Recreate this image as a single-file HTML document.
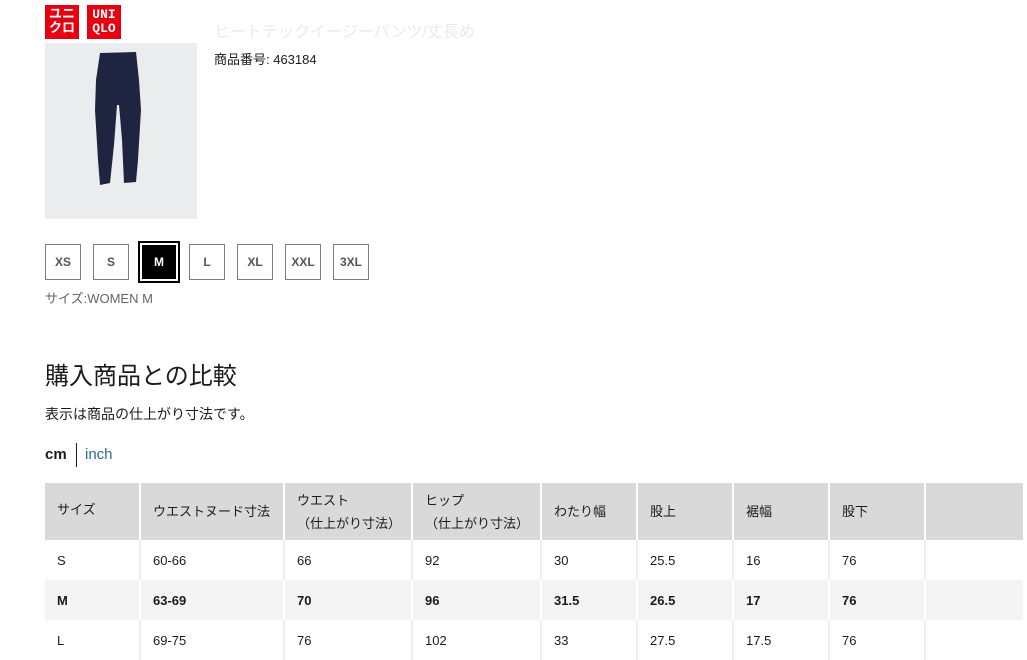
<!DOCTYPE html>
<html><head><meta charset="utf-8"><style>
*{margin:0;padding:0;box-sizing:border-box}
body{width:1027px;height:658px;overflow:hidden;background:#fff;font-family:"Liberation Sans","Noto Sans CJK JP",sans-serif;color:#1b1b1b;position:relative}
.a{position:absolute}
.logo{background:#e60012;width:34px;height:34px;color:#fff;font-weight:bold;font-size:13px;line-height:14px;text-align:center;padding-top:3px;letter-spacing:0px;font-family:"Liberation Mono","Noto Sans CJK JP",monospace}
.sz{width:36px;height:36px;border:1px solid #7d7d7d;font-size:12px;font-weight:bold;color:#555;text-align:center;line-height:34px;top:244px}
table{position:absolute;left:45px;top:483px;border-collapse:collapse;font-size:13px;width:978px;border:none}
td{height:40px;padding:0 0 0 12px;border:none;border-left:2px solid #eee;vertical-align:middle}
tr.h td{height:57px;background:#d9d9d9;border-left:2px solid #fff;vertical-align:middle;line-height:23px}
tr td:first-child{border-left:none}
tr.m td{background:#f4f4f4;font-weight:bold;border-left:2px solid #fff}
tr.m td:first-child{border-left:none}
</style></head><body>
<div class="a logo" style="left:45px;top:5px">ユニ<br>クロ</div>
<div class="a logo" style="left:87px;top:5px">UNI<br>QLO</div>
<div class="a" style="left:45px;top:43px;width:152px;height:176px;background:#ebecee"></div>
<svg class="a" style="left:90px;top:50px" width="60" height="140" viewBox="0 0 60 140">
<path d="M10 3 L46 2 L49 30 L51 60 L48 110 L46 132 L34 133 L32 90 L29 55 L27 55 L24 95 L20 133 L10 135 L8 110 L5 60 L6 30 Z" fill="#1f2540"/>
</svg>
<div class="a" style="left:214px;top:18px;font-size:16px;color:#eaeaea">ヒートテックイージーパンツ/丈長め</div>
<div class="a" style="left:214px;top:49px;font-size:13px">商品番号: 463184</div>
<div class="a sz" style="left:45px">XS</div>
<div class="a sz" style="left:93px">S</div>
<div class="a sz" style="left:138px;top:241px;width:42px;height:42px;border:2px solid #000;background:#fff;padding:2px"><div style="background:#000;color:#fff;width:34px;height:34px;line-height:34px">M</div></div>
<div class="a sz" style="left:189px">L</div>
<div class="a sz" style="left:237px">XL</div>
<div class="a sz" style="left:285px">XXL</div>
<div class="a sz" style="left:333px">3XL</div>
<div class="a" style="left:45px;top:288px;font-size:13px;color:#666">サイズ:WOMEN M</div>
<div class="a" style="left:45px;top:356px;font-size:24px">購入商品との比較</div>
<div class="a" style="left:45px;top:404px;font-size:14px">表示は商品の仕上がり寸法です。</div>
<div class="a" style="left:45px;top:446px;font-size:15px;font-weight:bold">cm</div>
<div class="a" style="left:76px;top:443px;width:1px;height:24px;background:#1b1b1b"></div>
<div class="a" style="left:85px;top:446px;font-size:15px;color:#2a6a93">inch</div>
<table>
<colgroup><col style="width:95px"><col style="width:144px"><col style="width:128px"><col style="width:129px"><col style="width:96px"><col style="width:96px"><col style="width:96px"><col style="width:96px"><col></colgroup>
<tr class="h"><td style="vertical-align:top;padding-top:15px">サイズ</td><td>ウエストヌード寸法</td><td>ウエスト<br>（仕上がり寸法）</td><td>ヒップ<br>（仕上がり寸法）</td><td>わたり幅</td><td>股上</td><td>裾幅</td><td>股下</td><td></td></tr>
<tr><td>S</td><td>60-66</td><td>66</td><td>92</td><td>30</td><td>25.5</td><td>16</td><td>76</td><td></td></tr>
<tr class="m"><td>M</td><td>63-69</td><td>70</td><td>96</td><td>31.5</td><td>26.5</td><td>17</td><td>76</td><td></td></tr>
<tr><td>L</td><td>69-75</td><td>76</td><td>102</td><td>33</td><td>27.5</td><td>17.5</td><td>76</td><td></td></tr>
</table>
</body></html>
